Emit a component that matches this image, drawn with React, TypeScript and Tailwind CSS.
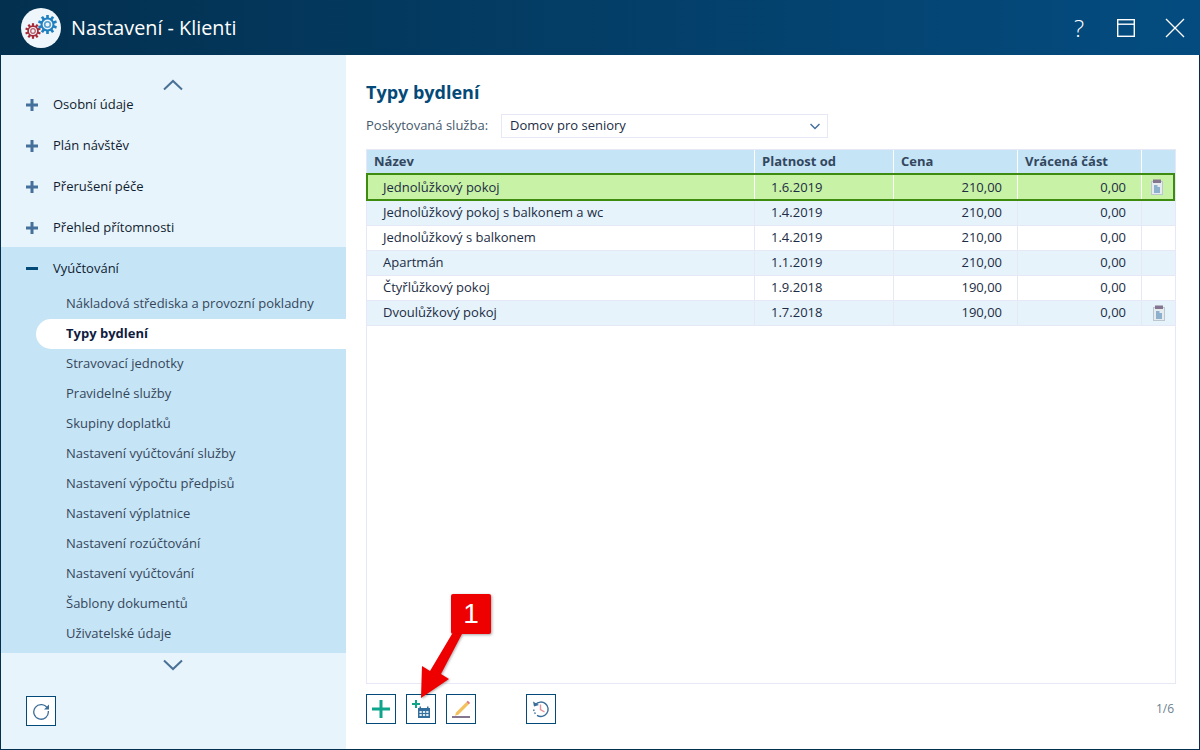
const sections = ["Osobní údaje", "Plán návštěv", "Přerušení péče", "Přehled přítomnosti"];

const subItems = [
  "Nákladová střediska a provozní pokladny",
  "Typy bydlení",
  "Stravovací jednotky",
  "Pravidelné služby",
  "Skupiny doplatků",
  "Nastavení vyúčtování služby",
  "Nastavení výpočtu předpisů",
  "Nastavení výplatnice",
  "Nastavení rozúčtování",
  "Nastavení vyúčtování",
  "Šablony dokumentů",
  "Uživatelské údaje",
];

const rows = [
  { name: "Jednolůžkový pokoj", from: "1.6.2019", price: "210,00", back: "0,00", clip: true },
  { name: "Jednolůžkový pokoj s balkonem a wc", from: "1.4.2019", price: "210,00", back: "0,00", clip: false },
  { name: "Jednolůžkový s balkonem", from: "1.4.2019", price: "210,00", back: "0,00", clip: false },
  { name: "Apartmán", from: "1.1.2019", price: "210,00", back: "0,00", clip: false },
  { name: "Čtyřlůžkový pokoj", from: "1.9.2018", price: "190,00", back: "0,00", clip: false },
  { name: "Dvoulůžkový pokoj", from: "1.7.2018", price: "190,00", back: "0,00", clip: true },
];

function Gear({ x, y, r, color }: { x: number; y: number; r: number; color: string }) {
  const teeth = Array.from({ length: 10 }, (_, i) => i * 36);
  return (
    <g>
      {teeth.map((a) => (
        <rect
          key={a}
          x={x - r * 0.17}
          y={y - r * 1.22}
          width={r * 0.34}
          height={r * 0.45}
          fill={color}
          transform={`rotate(${a} ${x} ${y})`}
        />
      ))}
      <circle cx={x} cy={y} r={r * 0.76} fill="none" stroke={color} strokeWidth={r * 0.26} />
      <circle cx={x} cy={y} r={r * 0.36} fill="none" stroke={color} strokeWidth={r * 0.2} opacity={0.75} />
    </g>
  );
}

function Logo() {
  return (
    <div className="h-10 w-10 rounded-full bg-[#eef6fb]">
      <svg width="40" height="40" viewBox="0 0 40 40">
        <Gear x={12} y={23} r={6.4} color="#a62b38" />
        <Gear x={26.500} y={16.500} r={7.800} color="#1f7fc0" />
      </svg>
    </div>
  );
}

function Clipboard() {
  return (
    <svg width="12" height="16" viewBox="0 0 12 16">
      <rect x="0.5" y="2.5" width="11" height="13" fill="#e6ebf0" stroke="#bcc6cf" />
      <rect x="2" y="0.5" width="8" height="3.5" fill="#85768f" />
      <path d="M3 6h3.500v2H9v6H3z" fill="#8db0cc" />
    </svg>
  );
}

function ToolButton({ children, className = "" }: { children: React.ReactNode; className?: string }) {
  return (
    <button
      type="button"
      className={`flex h-[30px] w-[30px] items-center justify-center border border-[#034a78] bg-white ${className}`}
    >
      {children}
    </button>
  );
}

export default function App() {
  return (
    <div className="relative flex h-[750px] w-[1200px] flex-col overflow-hidden font-['Open_Sans',sans-serif]">
      <header className="flex h-[55px] shrink-0 items-center bg-gradient-to-r from-[#03304f] to-[#044c80] pl-[21px] pr-[15px] text-white">
        <Logo />
        <h1 className="ml-[10px] text-[19.8px] leading-none">Nastavení - Klienti</h1>
        <div className="ml-auto flex items-center">
          <span className="text-[24px] leading-none font-light">?</span>
          <svg className="ml-[33px]" width="18" height="18" viewBox="0 0 18 18" fill="none" stroke="#fff" strokeWidth="1.4">
            <rect x="0.7" y="0.7" width="16.6" height="16.6" />
            <path d="M1 5.2h16" />
          </svg>
          <svg className="ml-[30px]" width="20" height="20" viewBox="0 0 20 20" fill="none" stroke="#fff" strokeWidth="1.3">
            <path d="M1 1l18 18M19 1L1 19" />
          </svg>
        </div>
      </header>

      <div className="flex min-h-0 flex-1 border-x border-b border-[#03304f]">
        <aside className="flex w-[345px] shrink-0 flex-col bg-[#e8f4fb]">
          <div className="flex h-[29px] justify-center pr-[2px] pt-[24px]">
            <svg width="20" height="12" viewBox="0 0 20 12" fill="none" stroke="#4a7197" strokeWidth="2">
              <path d="M1 10.5l9-8.5 9 8.5" />
            </svg>
          </div>
          {sections.map((s) => (
            <div key={s} className="flex h-[41px] items-center pl-[25px]">
              <svg width="12" height="12" viewBox="0 0 12 12" fill="#44709b">
                <path d="M4.5 0h3v4.5H12v3H7.500V12h-3V7.500H0v-3h4.500z" />
              </svg>
              <span className="ml-[15px] text-[13px] text-[#101c30]">{s}</span>
            </div>
          ))}
          <div className="-mt-px h-[406px] bg-[#c5e4f6] pt-px">
            <div className="flex h-[41px] items-center pl-[25px]">
              <div className="h-[3px] w-[12px] bg-[#034a78]" />
              <span className="ml-[15px] text-[13px] text-[#101c30]">Vyúčtování</span>
            </div>
            {subItems.map((s) =>
              s === "Typy bydlení" ? (
                <div key={s} className="ml-[35px] flex h-[30px] items-center rounded-l-[15px] bg-white pl-[30px] text-[13px] font-bold text-[#101c40]">
                  {s}
                </div>
              ) : (
                <div key={s} className="flex h-[30px] items-center pl-[65px] text-[13px] text-[#36465a]">
                  {s}
                </div>
              ),
            )}
          </div>
          <div className="flex justify-center pr-[2px] pt-[6px]">
            <svg width="20" height="12" viewBox="0 0 20 12" fill="none" stroke="#4a7197" strokeWidth="2">
              <path d="M1 1.500l9 8.500 9-8.500" />
            </svg>
          </div>
          <div className="pl-[25px] pt-[25px]">
            <ToolButton>
              <svg width="18" height="18" viewBox="0 0 18 18" fill="none">
                <path d="M15.500 6.500A7.300 7.300 0 1 0 16.300 9" stroke="#3a6d98" strokeWidth="1.300" />
                <path d="M17 2.500v5h-5z" fill="#3a6d98" />
              </svg>
            </ToolButton>
          </div>
        </aside>

        <main className="flex min-w-0 flex-1 flex-col bg-white pl-[20px] pr-[23px]">
          <h2 className="mt-[25px] text-[18px] leading-[25px] font-bold text-[#034a78]">Typy bydlení</h2>
          <div className="mt-[9px] flex h-[24px] items-center">
            <span className="w-[135px] text-[13px] text-[#44586c]">Poskytovaná služba:</span>
            <div className="flex h-[24px] w-[327px] items-center justify-between border border-[#e6e9f5] pl-[8px] pr-[7px] text-[13px] text-[#1c2c44]">
              Domov pro seniory
              <svg width="10" height="7" viewBox="0 0 10 7" fill="none" stroke="#44709b" strokeWidth="1.500">
                <path d="M0.500 1l4.500 4.500 4.500-4.500" />
              </svg>
            </div>
          </div>

          <div className="mt-[11px] flex h-[535px] flex-col border border-[#e6e9f5]">
            <div className="flex h-[23px] shrink-0 bg-[#c5e4f6] text-[13px] font-bold text-[#33475f]">
              <div className="flex w-[388px] items-center border-r border-white pl-[7px]">Název</div>
              <div className="flex w-[139px] items-center border-r border-white pl-[7px]">Platnost od</div>
              <div className="flex w-[124px] items-center border-r border-white pl-[7px]">Cena</div>
              <div className="flex w-[124px] items-center border-r border-white pl-[7px]">Vrácená část</div>
              <div className="flex-1" />
            </div>
            {rows.map((r, i) => {
              const selected = i === 0;
              const line = selected ? "border-white pt-px" : "border-[#e6e9f5]";
              return (
                <div
                  key={r.name + r.from}
                  className={`flex shrink-0 text-[13px] text-[#1c2c44] ${
                    selected
                      ? "-ml-px h-[28px] border-2 border-[#3d8b0f] bg-[#c8f2a5]"
                      : i % 2 === 1
                        ? "h-[25px] border-b border-[#e6e9f5] bg-[#e6f3fb]"
                        : "h-[25px] border-b border-[#e6e9f5] bg-white"
                  }`}
                >
                  <div className={`flex w-[388px] items-center border-r pl-[16px] ${line} ${selected ? "-ml-px" : ""}`}>{r.name}</div>
                  <div className={`flex w-[139px] items-center border-r pl-[16px] ${line}`}>{r.from}</div>
                  <div className={`flex w-[124px] items-center justify-end border-r pr-[15px] ${line}`}>{r.price}</div>
                  <div className={`flex w-[124px] items-center justify-end border-r pr-[15px] ${line}`}>{r.back}</div>
                  <div className={`flex flex-1 items-center justify-center ${selected ? "pr-px" : ""}`}>{r.clip && <Clipboard />}</div>
                </div>
              );
            })}
          </div>

          <div className="mt-[10px] flex items-center">
            <ToolButton>
              <svg width="18" height="18" viewBox="0 0 18 18" fill="#0ea58c">
                <path d="M7.500 0h3v7.500H18v3h-7.500V18h-3v-7.500H0v-3h7.500z" />
              </svg>
            </ToolButton>
            <ToolButton className="ml-[10px]">
              <svg width="24" height="24" viewBox="0 0 24 24">
                <path d="M6 3h2v3h3v2H8v3H6V8H3V6h3z" fill="#0ea58c" />
                <path d="M9 11h12v10H9z" fill="#336e9c" />
                <rect x="10.500" y="9.500" width="1.500" height="3" fill="#336e9c" />
                <rect x="18" y="9.500" width="1.500" height="3" fill="#336e9c" />
                <path d="M10.500 14h2.300v2h-2.300zM13.900 14h2.300v2h-2.300zM17.200 14h2.300v2h-2.300zM10.500 17h2.300v2h-2.300zM13.900 17h2.300v2h-2.300zM17.200 17h2.300v2h-2.300z" fill="#dfeaf3" />
              </svg>
            </ToolButton>
            <ToolButton className="ml-[10px]">
              <svg width="20" height="20" viewBox="0 0 20 20">
                <path d="M5 13.500L15.500 3l2.300 2.200L7.300 15.800l-3.300 1z" fill="#f3c25f" />
                <path d="M15.500 3l1.300-1.300 2.300 2.200-1.300 1.300z" fill="#d9727b" />
                <rect x="1" y="17" width="18" height="2" fill="#84768f" />
              </svg>
            </ToolButton>
            <ToolButton className="ml-[50px]">
              <svg width="18" height="18" viewBox="0 0 18 18" fill="none">
                <path d="M3.500 4.500A7.200 7.200 0 1 1 5 15.300" stroke="#3a6d98" strokeWidth="1.400" />
                <path d="M1.800 9.500A7 7 0 0 0 4 14.300" stroke="#3a6d98" strokeWidth="1.400" strokeDasharray="1.500 1.500" />
                <path d="M1 1.500l1 5 5-1.500z" fill="#3a6d98" />
                <path d="M8.500 4.500v5l4 2.500" stroke="#e8929b" strokeWidth="1.400" />
              </svg>
            </ToolButton>
            <span className="ml-auto pr-[2px] text-[12px] text-[#6d7f90]">1/6</span>
          </div>
        </main>
      </div>

      {/* red callout laid over the toolbar */}
      <div className="absolute left-[451px] top-[594px] flex h-[40px] w-[40px] items-center justify-center rounded-[2px] bg-[#ee0000] font-['Liberation_Sans',sans-serif] text-[28px] leading-none text-white shadow-[1px_1px_3px_rgba(0,0,0,0.35)]">
        1
      </div>
      <svg className="absolute left-[415px] top-[630px] drop-shadow-[1px_1px_1px_rgba(0,0,0,0.3)]" width="55" height="72" viewBox="0 0 55 72">
        <path d="M37 4h10L26 44l8 5-28 19L7 36l8 5z" fill="#ee0000" />
      </svg>
    </div>
  );
}
